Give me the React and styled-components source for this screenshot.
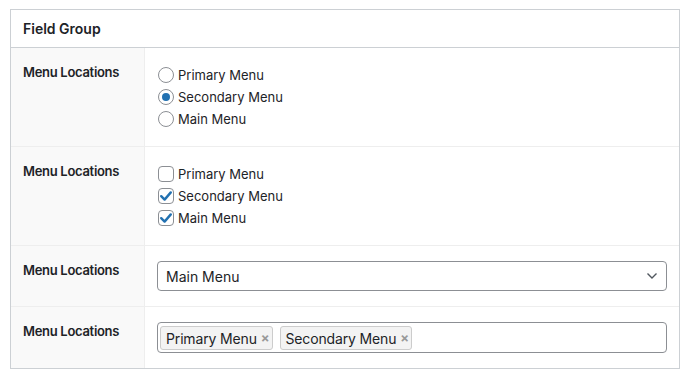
import React from "react";
import styled, { createGlobalStyle } from "styled-components";

const GlobalStyle = createGlobalStyle`
  body {
    margin: 0;
    background: #ffffff;
    font-family: Inter, "Liberation Sans", sans-serif;
    color: #1d2327;
  }
`;

const Page = styled.div`
  padding: 9px 0 0 10px;
`;

const Box = styled.div`
  width: 668px;
  border: 1px solid #ccd0d4;
  background: #fff;
`;

const Header = styled.div`
  display: flex;
  align-items: center;
  height: 37px;
  padding: 0 12px;
  border-bottom: 1px solid #ccd0d4;
`;

const Title = styled.h2`
  margin: 0;
  font-size: 14px;
  font-weight: 600;
  line-height: 1.4;
`;

const Row = styled.div`
  display: grid;
  grid-template-columns: 134px 1fr;
  & + & {
    border-top: 1px solid #eeeeee;
  }
`;

const Label = styled.div`
  padding: 15px 12px;
  background: #f9f9f9;
  border-right: 1px solid #eeeeee;
  font-size: 13px;
  font-weight: 600;
  line-height: 18px;
  letter-spacing: -0.3px;
`;

const Input = styled.div`
  padding: ${(p) => (p.list ? "16px 12px" : "15px 12px")};
`;

const List = styled.ul`
  list-style: none;
  margin: 0;
  padding: 0;
`;

const Item = styled.li`
  display: flex;
  align-items: center;
  height: 22px;
  font-size: 13px;
`;

const Radio = styled.span`
  box-sizing: border-box;
  width: 16px;
  height: 16px;
  margin: 0 4px 0 1px;
  border: 1px solid #8c8f94;
  border-radius: 50%;
  display: flex;
  align-items: center;
  justify-content: center;
  &::after {
    content: "";
    display: ${(p) => (p.checked ? "block" : "none")};
    width: 8px;
    height: 8px;
    border-radius: 50%;
    background: #2271b1;
  }
`;

const Check = styled.span`
  box-sizing: border-box;
  width: 16px;
  height: 16px;
  margin: 0 4px 0 1px;
  border: 1px solid #8c8f94;
  border-radius: 4px;
  display: flex;
  align-items: center;
  justify-content: center;
  svg {
    display: block;
  }
`;

const Select = styled.div`
  box-sizing: border-box;
  display: flex;
  align-items: center;
  justify-content: space-between;
  height: 30px;
  padding: 0 8px 0 8px;
  border: 1px solid #8c8f94;
  border-radius: 4px;
  font-size: 14px;
`;

const Tags = styled.div`
  box-sizing: border-box;
  display: flex;
  align-items: flex-start;
  gap: 7px;
  height: 31px;
  padding: 3px 2px 0;
  border: 1px solid #8c8f94;
  border-radius: 4px;
`;

const Tag = styled.span`
  box-sizing: border-box;
  display: flex;
  align-items: center;
  height: 24px;
  padding: 0 2px 0 5px;
  background: #f3f3f3;
  border: 1px solid #cccccc;
  border-radius: 3px;
  font-size: 14px;
  letter-spacing: -0.15px;
`;

const Remove = styled.span`
  margin-left: 4px;
  color: #999999;
  font-size: 13px;
  font-weight: 700;
`;

const CheckMark = () => (
  <svg width="14" height="14" viewBox="0 0 14 14">
    <path d="M2.2 7.2 L5.6 10.6 L11.8 3.4" fill="none" stroke="#2271b1" strokeWidth="2.4" strokeLinecap="round" strokeLinejoin="round" />
  </svg>
);

const Chevron = () => (
  <svg width="12" height="8" viewBox="0 0 12 8">
    <path d="M1.5 1.5 L6 6 L10.5 1.5" fill="none" stroke="#50575e" strokeWidth="1.4" />
  </svg>
);

const menus = ["Primary Menu", "Secondary Menu", "Main Menu"];

export default function App() {
  return (
    <Page>
      <GlobalStyle />
      <Box>
        <Header>
          <Title>Field Group</Title>
        </Header>
        <Row>
          <Label>Menu Locations</Label>
          <Input list>
            <List>
              {menus.map((m, i) => (
                <Item key={m}>
                  <Radio checked={i === 1} />
                  {m}
                </Item>
              ))}
            </List>
          </Input>
        </Row>
        <Row>
          <Label>Menu Locations</Label>
          <Input list>
            <List>
              {menus.map((m, i) => (
                <Item key={m}>
                  <Check>{i > 0 && <CheckMark />}</Check>
                  {m}
                </Item>
              ))}
            </List>
          </Input>
        </Row>
        <Row>
          <Label>Menu Locations</Label>
          <Input>
            <Select>
              Main Menu
              <Chevron />
            </Select>
          </Input>
        </Row>
        <Row>
          <Label>Menu Locations</Label>
          <Input>
            <Tags>
              <Tag>
                Primary Menu<Remove>×</Remove>
              </Tag>
              <Tag>
                Secondary Menu<Remove>×</Remove>
              </Tag>
            </Tags>
          </Input>
        </Row>
      </Box>
    </Page>
  );
}
